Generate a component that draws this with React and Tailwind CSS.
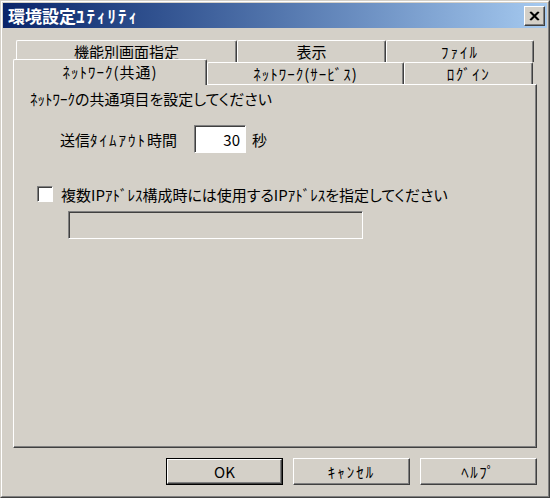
import { useState } from "react";

const font = "font-['Noto_Sans_CJK_JP','Noto_Sans',sans-serif]";

function TopTab({ label, width, track = "" }) {
  return (
    <div
      className={`${width} h-[22px] flex items-center justify-center border-t border-l border-white border-r border-r-[#404040] rounded-tl-[2px] rounded-tr-[2px] shadow-[inset_-1px_0_#808080] text-[15px] leading-none ${track}`}
    >
      {label}
    </div>
  );
}

function Button({ label, isDefault, track = "" }) {
  return (
    <div className={`w-[117px] h-[27px] ${isDefault ? "border border-black" : ""}`}>
      <div className={`w-full h-full flex items-center justify-center border-t border-l border-white border-r border-b border-r-[#404040] border-b-[#404040] shadow-[inset_-1px_-1px_#808080] text-[15px] leading-none ${track}`}>
        {label}
      </div>
    </div>
  );
}

export default function App() {
  const [checked, setChecked] = useState(false);

  return (
    <div
      className={`w-[550px] h-[498px] bg-[#D4D0C8] text-black ${font} border border-t-[#D4D0C8] border-l-[#D4D0C8] border-r-[#404040] border-b-[#404040] [font-feature-settings:'palt']`}
    >
      <div className="w-full h-full flex flex-col border border-t-white border-l-white border-r-[#808080] border-b-[#808080] p-px">
        {/* Title bar */}
        <div className="h-[25px] flex items-center justify-between bg-gradient-to-r from-[#0A246A] to-[#A6CAF0] pl-[5px] pr-[2px]">
          <span className="text-white font-bold text-[17px] leading-none">
            環境設定<span className="tracking-[2px]">ﾕﾃｨﾘﾃｨ</span>
          </span>
          <div className="w-[21px] h-[20px] flex items-center justify-center border-t border-l border-white border-r border-b border-r-[#404040] border-b-[#404040] shadow-[inset_-1px_-1px_#808080] bg-[#D4D0C8]">
            <svg width="11" height="10" viewBox="0 0 11 10">
              <path d="M1 1 L9 9 M2 1 L10 9 M9 1 L1 9 M10 1 L2 9" stroke="#000" strokeWidth="1.4" />
            </svg>
          </div>
        </div>

        {/* Tabs */}
        <div className="flex flex-col pl-[10px] pr-[9px] pt-[12px] flex-1">
          <div className="flex pl-[3px]">
            <TopTab label="機能別画面指定" width="w-[221px]" />
            <TopTab label="表示" width="w-[149px]" />
            <TopTab label="ﾌｧｲﾙ" width="w-[148px]" track="tracking-[2px]" />
          </div>
          <div className="flex items-end h-[22px]">
            <div className="relative z-10 w-[194px] h-[26px] -mb-px bg-[#D4D0C8] flex items-center justify-center pb-[2px] border-t border-l border-white border-r border-r-[#404040] rounded-tl-[2px] rounded-tr-[2px] shadow-[inset_-1px_0_#808080] text-[15px] leading-none tracking-[1px]">
              ﾈｯﾄﾜｰｸ(共通)
            </div>
            <TopTab label="ﾈｯﾄﾜｰｸ(ｻｰﾋﾞｽ)" width="w-[197px]" track="tracking-[1px]" />
            <TopTab label="ﾛｸﾞｲﾝ" width="w-[129px]" track="tracking-[1.5px]" />
          </div>

          {/* Panel */}
          <div className="w-[524px] h-[364px] flex flex-col border-t border-l border-white border-r border-b border-r-[#404040] border-b-[#404040] shadow-[inset_-1px_-1px_#808080] text-[15px] leading-none">
            <div className="pl-[16px] pt-[6px]">ﾈｯﾄﾜｰｸの共通項目を設定してください</div>

            <div className="flex items-center pl-[46px] mt-[19px]">
              <span className="w-[134px]">
                送信<span className="tracking-[2px]">ﾀｲﾑｱｳﾄ</span>時間
              </span>
              <div className="w-[52px] h-[28px] bg-white flex items-center justify-end pr-[5px] border-t border-l border-[#808080] border-r border-b border-r-white border-b-white shadow-[inset_1px_1px_#404040]">
                30
              </div>
              <span className="ml-[6px]">秒</span>
            </div>

            <label className="flex items-center pl-[23px] mt-[33px] cursor-default">
              <div
                onClick={() => setChecked(!checked)}
                className="w-[16px] h-[16px] bg-white flex items-center justify-center border-t border-l border-[#808080] border-r border-b border-r-white border-b-white shadow-[inset_1px_1px_#404040]"
              >
                {checked && (
                  <svg width="9" height="9" viewBox="0 0 9 9">
                    <path d="M1 4 L3 6 L8 1" stroke="#000" strokeWidth="2" fill="none" />
                  </svg>
                )}
              </div>
              <span className="ml-[8px]">複数IPｱﾄﾞﾚｽ構成時には使用するIPｱﾄﾞﾚｽを指定してください</span>
            </label>

            <div className="ml-[54px] mt-[9px] w-[295px] h-[28px] bg-[#D4D0C8] border-t border-l border-[#808080] border-r border-b border-r-white border-b-white shadow-[inset_1px_1px_#404040]" />
          </div>

          {/* Buttons */}
          <div className="flex justify-end gap-[10px] mt-[10px] pr-[1px]">
            <Button label="OK" isDefault />
            <Button label="ｷｬﾝｾﾙ" track="tracking-[2px]" />
            <Button label="ﾍﾙﾌﾟ" track="tracking-[1.5px]" />
          </div>
        </div>
      </div>
    </div>
  );
}
